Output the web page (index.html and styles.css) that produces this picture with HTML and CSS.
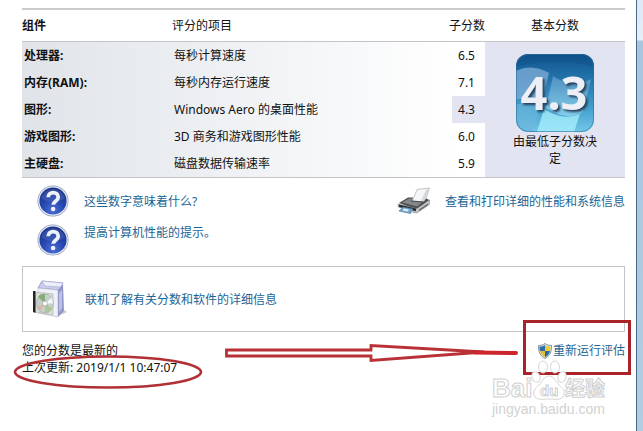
FILE: index.html
```html
<!doctype html>
<html lang="zh-CN">
<head>
    <meta charset="UTF-8">
    <meta name="viewport" content="width=device-width, initial-scale=1.0">
    <title>Windows 体验指数</title>
    <link rel="stylesheet" href="styles.css">
</head>
<body>
<svg width="0" height="0" class="defs">
    <defs>
        <radialGradient id="ball" cx="50%" cy="85%" r="80%">
            <stop offset="0" stop-color="#4a6fd8"/>
            <stop offset="0.5" stop-color="#2747ae"/>
            <stop offset="1" stop-color="#1d3488"/>
        </radialGradient>
        <symbol id="help" viewBox="0 0 32 32">
            <circle cx="16" cy="16" r="15.5" fill="#8b98bd"/>
            <circle cx="16" cy="16" r="14.8" fill="#e6eaf4"/>
            <circle cx="16" cy="16" r="13.6" fill="url(#ball)"/>
            <path d="M4 13a12.5 12.5 0 0 1 24 0c-6 5-17 6-24 0z" fill="#6f88cc" opacity=".25"/>
            <path d="M11.2 12.200c0-6.200 10-6 10 0 0 4-5 4-5 7.600" fill="none" stroke="#eef1fa" stroke-width="3.800"/>
            <circle cx="16.100" cy="24" r="2.300" fill="#eef1fa"/>
        </symbol>
    </defs>
</svg>

<main>
    <table>
        <colgroup>
            <col class="col-name">
            <col>
            <col class="col-score">
            <col class="col-base">
        </colgroup>
        <thead>
        <tr>
            <th class="name">组件</th>
            <th>评分的项目</th>
            <th class="score">子分数</th>
            <th class="base">基本分数</th>
        </tr>
        </thead>
        <tbody>
        <tr>
            <th class="name">处理器:</th>
            <td>每秒计算速度</td>
            <td class="score">6.5</td>
            <td class="base" rowspan="5">
                <svg class="badge" viewBox="0 0 78 78">
                    <defs>
                        <linearGradient id="tile" x1="0" y1="0" x2="0" y2="1">
                            <stop offset="0" stop-color="#10528c"/>
                            <stop offset="0.4" stop-color="#287db4"/>
                            <stop offset="0.75" stop-color="#4ba6d2"/>
                            <stop offset="1" stop-color="#73c8e8"/>
                        </linearGradient>
                        <linearGradient id="pane" x1="0" y1="0" x2="0" y2="1">
                            <stop offset="0" stop-color="#8bb7de" stop-opacity=".75"/>
                            <stop offset="1" stop-color="#b5eeff" stop-opacity=".85"/>
                        </linearGradient>
                        <clipPath id="tileClip"><rect width="78" height="78" rx="12"/></clipPath>
                    </defs>
                    <g clip-path="url(#tileClip)">
                        <rect width="78" height="78" fill="url(#tile)"/>
                        <path d="M0 17c12-6 23-4 33 2l-7 27c-9-5-17-4-26 0z" fill="#82aed8" opacity=".75"/>
                        <path d="M37 22c13 9 25 10 38 3l-8 33c-12 7-24 4-37-4z" fill="url(#pane)" opacity=".6"/>
                        <path d="M0 51c10-4 16-4 24 0l-7 27H0z" fill="#6cb5dc" opacity=".65"/>
                        <path d="M28 55c12 8 24 10 36 5l-6 18H21z" fill="#aaf0fc" opacity=".75"/>
                        <path d="M0 0h78v13C55 6 25 6 0 13z" fill="#0c4b80" opacity=".3"/>
                    </g>
                    <rect x=".5" y=".5" width="77" height="77" rx="12" fill="none" stroke="#2c709f" stroke-opacity=".6"/>
                    <text x="38" y="56">4.3</text>
                </svg>
                <p>由最低子分数决定</p>
            </td>
        </tr>
        <tr>
            <th class="name">内存(RAM):</th>
            <td>每秒内存运行速度</td>
            <td class="score">7.1</td>
        </tr>
        <tr>
            <th class="name">图形:</th>
            <td>Windows Aero 的桌面性能</td>
            <td class="score lowest">4.3</td>
        </tr>
        <tr>
            <th class="name">游戏图形:</th>
            <td>3D 商务和游戏图形性能</td>
            <td class="score">6.0</td>
        </tr>
        <tr>
            <th class="name">主硬盘:</th>
            <td>磁盘数据传输速率</td>
            <td class="score">5.9</td>
        </tr>
        </tbody>
    </table>

    <div class="links">
        <ul>
            <li><svg class="icon"><use href="#help"/></svg><a href="#">这些数字意味着什么?</a></li>
            <li><svg class="icon"><use href="#help"/></svg><a href="#">提高计算机性能的提示。</a></li>
        </ul>
        <div class="print">
            <svg class="printer" viewBox="0 0 34 28">
                <path d="M15 15L20 2.5 32.5 1 28 15z" fill="#f6f7f8" stroke="#b4b7ba" stroke-width=".8"/>
                <path d="M24 14l5-11 3-1.5L28 15z" fill="#d5d8da"/>
                <path d="M2 16l9-5.5h5l-1 3 12 1 2-3 3.5 1.5-13 9.5z" fill="#4b4e51"/>
                <path d="M5 15.5l7-4h3l-1 3 11 1-5 4z" fill="#85888b"/>
                <path d="M1 17l19 4.5 12.5-8.500v4.500L20 26l-4-.5V22L1 20z" fill="#c2c5c8" stroke="#777b7f" stroke-width=".5"/>
                <path d="M2 17.600l17 4v2.600L2 20z" fill="#292c30"/>
                <path d="M6 20l10 2-2.500 4.500L2 24z" fill="#72a7cf" stroke="#476d8e" stroke-width=".6"/>
                <path d="M7 21.500l5 1-1.500 2-5-1z" fill="#dceffa"/>
                <path d="M22 22.500l9-6v1.500l-9 6z" fill="#606468"/>
            </svg>
            <a href="#">查看和打印详细的性能和系统信息</a>
        </div>
    </div>

    <div class="online">
        <svg class="software" viewBox="0 0 36 40">
            <path d="M26 37l9-4-4-3z" fill="#aaa" opacity=".6"/>
            <path d="M6 9L10 2l21 2-3 7z" fill="#c9cceb" stroke="#8b90bd" stroke-width=".8"/>
            <path d="M10 2l3 5 16 1 2-4z" fill="#eceefa" stroke="#a1a5cd" stroke-width=".5"/>
            <path d="M6 9l20 2v27L6 34z" fill="#f0f1f7" stroke="#b4b7ce" stroke-width=".6"/>
            <path d="M26 11l5-6 1 27-6 6z" fill="#9298c9"/>
            <path d="M27 14l3-3v18l-3 4z" fill="#bcc1e2"/>
            <path d="M3 13l18 2v21L3 33z" fill="#d9ded8" stroke="#a6aaa8" stroke-width=".6"/>
            <path d="M1 12h2.500v22L1 33z" fill="#252525"/>
            <ellipse cx="13" cy="24.500" rx="8.500" ry="9.500" fill="#c8ceca" stroke="#9ea6a1" stroke-width=".6"/>
            <path d="M13 24.500L6 18c2-3 4-3.500 7-3z" fill="#86ad78"/>
            <path d="M13 24.500l7 5c-2 3-4 4.500-7 4z" fill="#a9c797"/>
            <path d="M13 24.500l7-6 1 6z" fill="#f5f6fb"/>
            <path d="M13 24.500L5 28l3 4z" fill="#d9b7a0"/>
            <circle cx="13" cy="24.500" r="2.400" fill="#fff" stroke="#949b96" stroke-width=".6"/>
        </svg>
        <a href="#">联机了解有关分数和软件的详细信息</a>
    </div>

    <footer>
        <div class="status">
            <p>您的分数是最新的</p>
            <p>上次更新: 2019/1/1 10:47:07</p>
            <svg class="circle" viewBox="0 0 190 34">
                <ellipse cx="95" cy="17" rx="93" ry="15.500" fill="none" stroke="#b03035" stroke-width="2.600"/>
            </svg>
        </div>
        <svg class="arrow" viewBox="0 0 294 20">
            <path d="M1.500 7H146V2.500L259 9 146 17.500V13H1.500z" fill="#fff" stroke="#b93136" stroke-width="2.800"/>
            <path d="M250 9.500l41 .5" stroke="#cc252b" stroke-width="4" stroke-linecap="round"/>
        </svg>
        <div class="rerun">
            <svg class="shield" viewBox="0 0 14 16">
                <path d="M7 .5C9 2 11 2.500 13.500 2.500c0 6-1 10-6.500 13C1.500 12.500.5 8.500.5 2.500 3 2.500 5 2 7 .5z" fill="#e4e8eb" stroke="#657986" stroke-width=".8"/>
                <path d="M7 2v6H2c-.4-1.500-.5-2.500-.5-4.500C4 3.500 5.500 3 7 2z" fill="#2d6da9"/>
                <path d="M7 2c1.500 1 3 1.500 5.500 1.500 0 2-.1 3-.5 4.500H7z" fill="#e9cd3c"/>
                <path d="M2 8h5v6.200C4 12.500 2.700 11 2 8z" fill="#e5bd31"/>
                <path d="M7 8h5c-.7 3-2 4.500-5 6.200z" fill="#2c68a2"/>
            </svg>
            <a href="#">重新运行评估</a>
        </div>
        <svg class="watermark" viewBox="0 0 120 62">
            <text class="logo" x="2" y="36">Bai</text>
            <g fill="#fff" stroke="#d5d5d5">
                <ellipse cx="46" cy="16" rx="4" ry="5.500" transform="rotate(-20 46 16)"/>
                <ellipse cx="53" cy="6" rx="4.500" ry="6"/>
                <ellipse cx="65" cy="6" rx="4.500" ry="6"/>
                <ellipse cx="72" cy="16" rx="4" ry="5.500" transform="rotate(20 72 16)"/>
                <path d="M59 15c5 0 6 5 10 9s6 5 5 10c-2 6-9 4-15 4s-13 2-15-4c-1-5 1-6 5-10s5-9 10-9z"/>
            </g>
            <text class="du" x="50" y="35">du</text>
            <text class="exp" x="75" y="35">经验</text>
            <text class="site" x="2" y="53">jingyan.baidu.com</text>
        </svg>
    </footer>
</main>
<div class="edge"></div>
</body>
</html>
```
FILE: styles.css
```css
* {
    margin: 0;
    padding: 0;
    box-sizing: border-box;
}

body {
    display: flex;
    min-height: 100vh;
    background: #fff;
    color: #111;
    font: 12px/17px "Noto Sans", "Noto Sans CJK SC", sans-serif;
}

.defs {
    position: absolute;
}

a {
    color: #1a6595;
    text-decoration: none;
    white-space: nowrap;
}

ul {
    list-style: none;
}

svg {
    flex: none;
    overflow: visible;
}

main {
    flex: 1;
    padding: 8px 11px 0 22px;
}

/* 窗口右边框 */
.edge {
    width: 7px;
    border-left: 1px solid #48688a;
    background: linear-gradient(#dce8f4, #e6eef7 40px, #a7c6de 41px, #b1cde3);
}

/* 分数表 */
table {
    width: 100%;
    table-layout: fixed;
    border-collapse: separate;
    border-spacing: 0;
    border-top: 2px solid #ccc;
    border-bottom: 1px solid #c4c4c8;
}

.col-name {
    width: 150px;
}

.col-score {
    width: 36px;
}

.col-base {
    width: 140px;
}

th {
    font-weight: normal;
    text-align: left;
    white-space: nowrap;
}

.name {
    font-weight: bold;
}

thead th {
    height: 32px;
    border-bottom: 1px solid #c4c4c8;
}

tbody {
    background: linear-gradient(to right, #e0e4e9, #f3f5f7 45%, #fff 72%);
}

tbody th,
tbody td {
    height: 27px;
    padding-left: 2px;
}

thead .score {
    text-align: right;
}

tbody .score {
    padding: 0 4px 0 0;
    border-left: 3px solid transparent;
    background-clip: padding-box;
    text-align: center;
}

tbody .lowest {
    background-color: #e3e4f1;
}

.base {
    text-align: center;
}

tbody .base {
    padding: 12px 0 10px;
    background: #e3e4f1;
    vertical-align: top;
}

.base p {
    width: 84px;
    margin: 1px auto 0;
}

.badge {
    display: block;
    width: 78px;
    height: 78px;
    margin: 0 auto;
}

.badge text {
    fill: #eceff6;
    font: bold 47px "Noto Sans", sans-serif;
    text-anchor: middle;
    filter: drop-shadow(2px 2px 1px #243f59);
}

/* 帮助链接 */
.links {
    display: flex;
    justify-content: space-between;
    padding: 7px 0 10px 15px;
}

.links li {
    display: flex;
    gap: 15px;
}

.links li + li {
    margin-top: 7px;
}

.links li:first-child,
.print {
    align-items: center;
}

.icon {
    width: 32px;
    height: 32px;
}

.print {
    display: flex;
    gap: 14px;
    height: 32px;
}

.printer {
    width: 34px;
    height: 28px;
}

.online {
    display: flex;
    align-items: center;
    gap: 17px;
    height: 66px;
    padding-left: 9px;
    border: 1px solid #c4c4c8;
}

.software {
    width: 36px;
    height: 40px;
}

/* 底部状态与标注 */
footer {
    position: relative;
    display: flex;
    justify-content: space-between;
    align-items: flex-start;
    padding-top: 10px;
}

.status {
    position: relative;
}

.circle {
    position: absolute;
    left: -9px;
    top: 13px;
    width: 190px;
    height: 34px;
}

.arrow {
    position: absolute;
    left: 203px;
    top: 11px;
    width: 294px;
    height: 20px;
}

.rerun {
    position: relative;
    display: flex;
    align-items: center;
    gap: 1px;
}

/* 红框 */
.rerun::after {
    content: "";
    position: absolute;
    left: -15px;
    right: -6px;
    top: -22px;
    bottom: -16px;
    border: 3px solid #a92329;
    pointer-events: none;
}

.shield {
    width: 14px;
    height: 16px;
}

.watermark {
    position: absolute;
    right: 15px;
    top: 29px;
    width: 120px;
    height: 62px;
}

.watermark text {
    fill: #fff;
    stroke: #d0d0d0;
    stroke-width: 1px;
    font-family: "Liberation Sans", "Noto Sans CJK SC", sans-serif;
    font-weight: bold;
}

.watermark .logo {
    font-size: 26px;
}

.watermark .du {
    font-size: 15px;
}

.watermark .exp {
    font-size: 20px;
}

.watermark .site {
    fill: #d2d2d2;
    stroke: none;
    font-size: 14px;
    font-weight: normal;
}
```
